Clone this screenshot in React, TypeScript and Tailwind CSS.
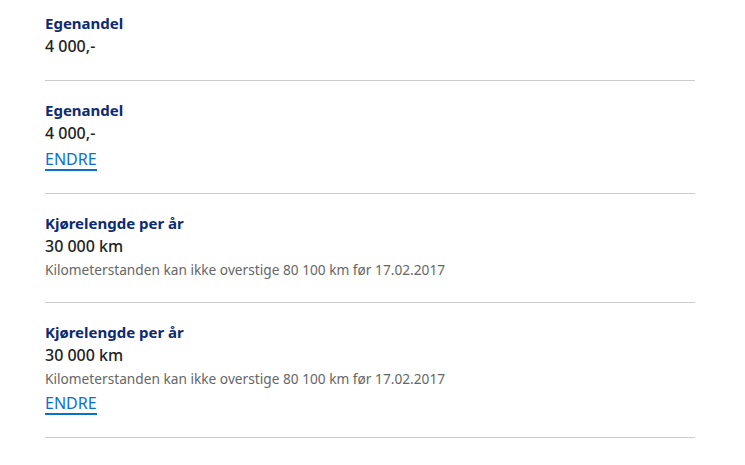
import React from "react";

type Item = { title: string; value: string; note?: string; edit?: boolean };

const items: Item[] = [
  { title: "Egenandel", value: "4 000,-" },
  { title: "Egenandel", value: "4 000,-", edit: true },
  {
    title: "Kjørelengde per år",
    value: "30 000 km",
    note: "Kilometerstanden kan ikke overstige 80 100 km før 17.02.2017",
  },
  {
    title: "Kjørelengde per år",
    value: "30 000 km",
    note: "Kilometerstanden kan ikke overstige 80 100 km før 17.02.2017",
    edit: true,
  },
];

export default function App() {
  return (
    <div
      className="w-[745px] h-[465px] bg-white pl-[45px] pr-[50px]"
      style={{ fontFamily: '"Noto Sans", "Open Sans", sans-serif' }}
    >
      {items.map((it, i) => (
        <div
          key={i}
          className={`border-b border-[#cccccc] ${i === 0 ? "pt-[12px]" : "pt-[18px]"} ${
            it.note && !it.edit ? "pb-[20px]" : "pb-[22px]"
          }`}
        >
          <div className="text-[15px] leading-[23px] font-bold text-[#0d2a73]">{it.title}</div>
          <div className="text-[16px] leading-[23px] font-medium text-[#222222]">{it.value}</div>
          {it.note && (
            <div className="text-[13.7px] leading-[24px] text-[#666666]">{it.note}</div>
          )}
          {it.edit && (
            <div className={`flex ${it.note ? "pt-[2px]" : "pt-[4px]"}`}>
              <a className="block text-[16px] leading-[20px] text-[#0b6fd1] border-b-2 border-[#0b6fd1]">
                ENDRE
              </a>
            </div>
          )}
        </div>
      ))}
    </div>
  );
}
